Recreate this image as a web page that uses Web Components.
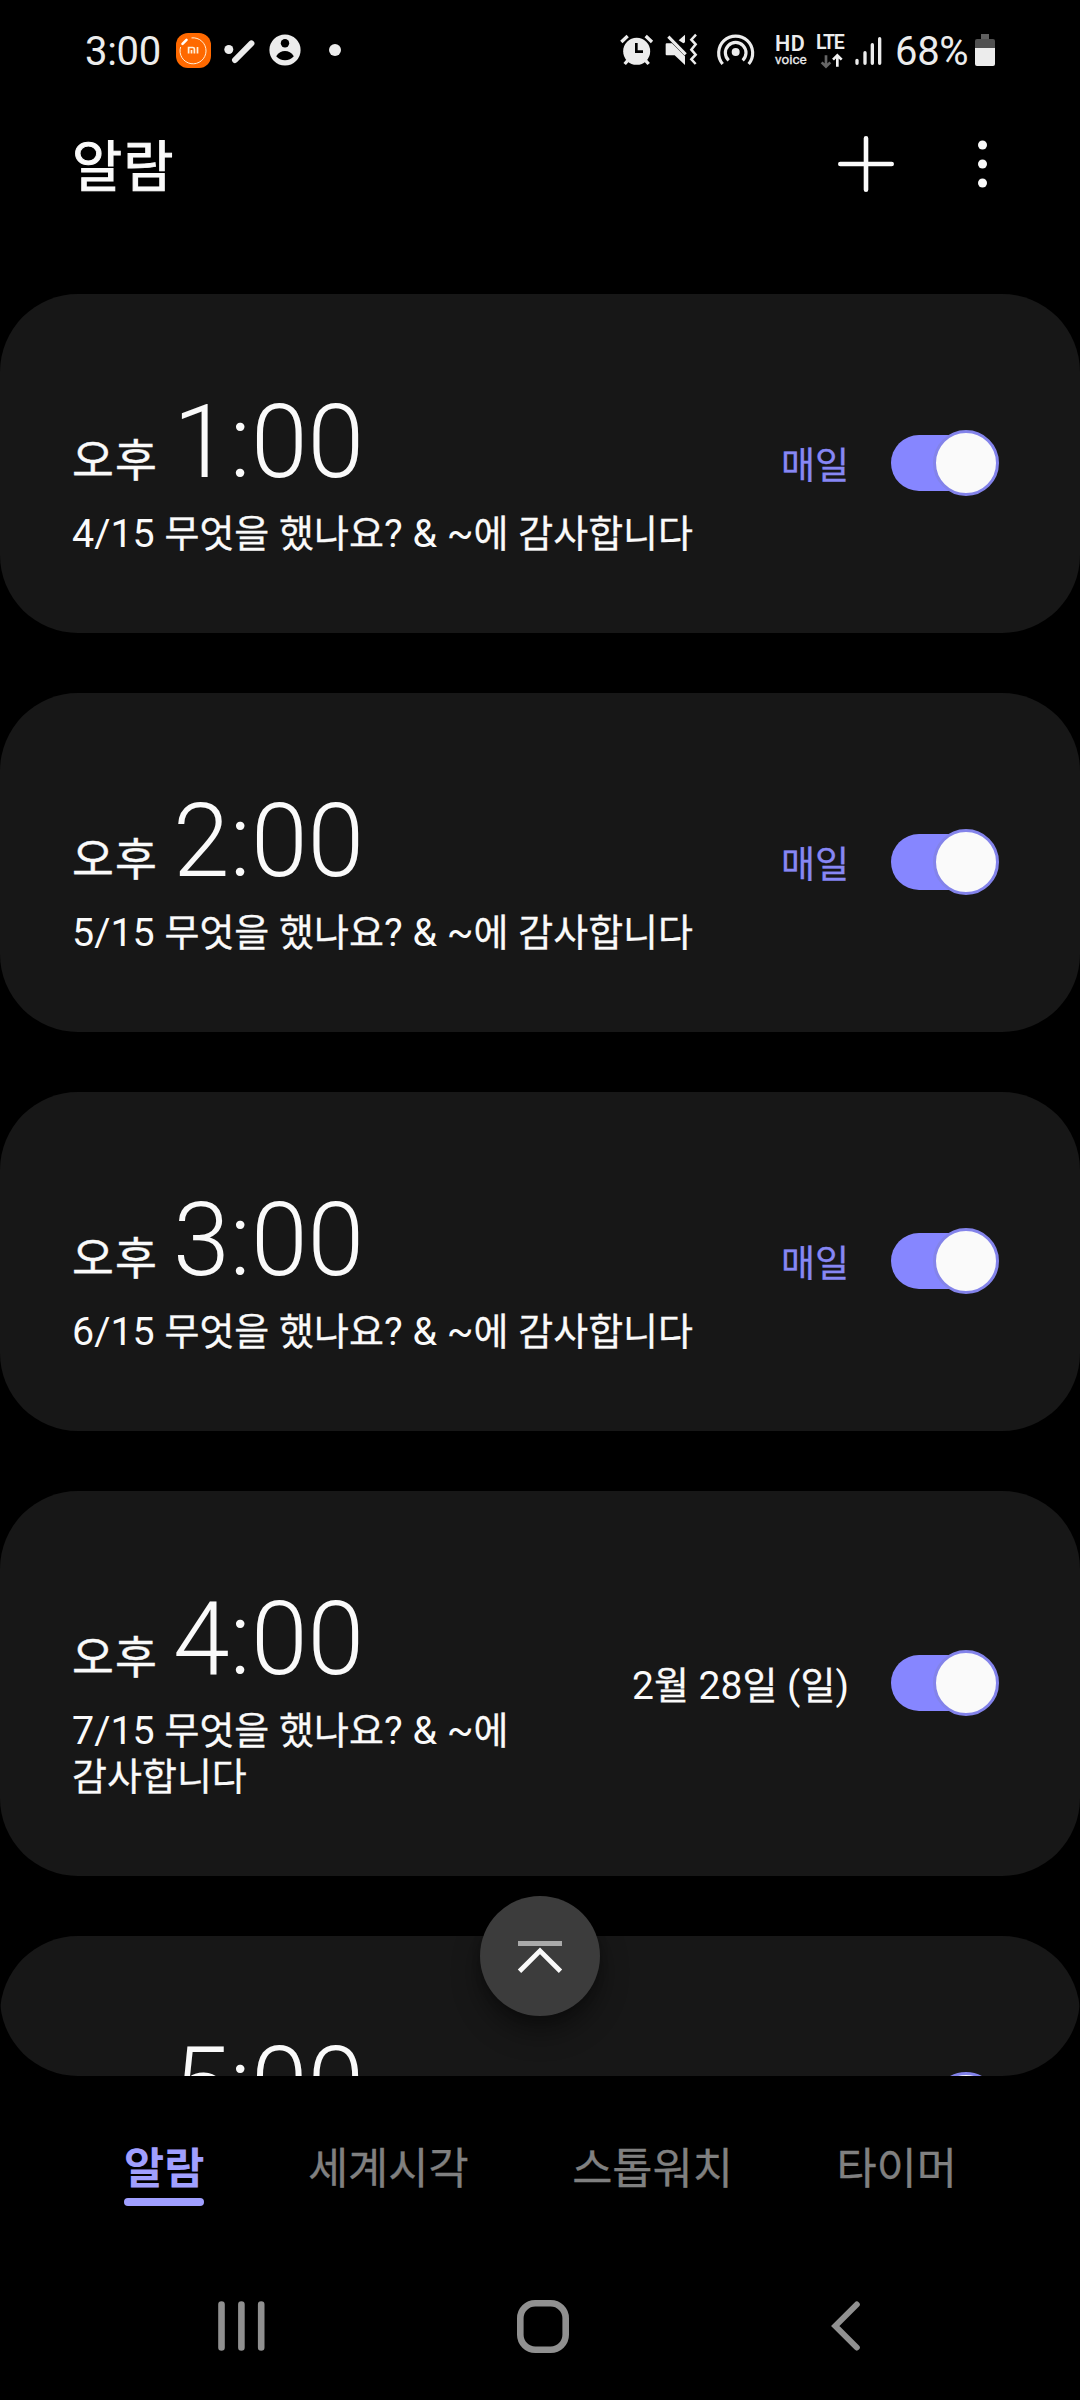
<!DOCTYPE html>
<html lang="ko">
<head>
<meta charset="utf-8">
<title>알람</title>
<style>
html,body{margin:0;background:#000}
body{width:1080px;height:2400px;overflow:hidden;color:#fafafa;font-family:Roboto,"Noto Sans CJK KR",sans-serif}
</style>
</head>
<body>
<clock-app></clock-app>
<script>
const define=(name,html,setup)=>customElements.define(name,class extends HTMLElement{
  connectedCallback(){
    if(this.shadowRoot)return;
    const t=document.createElement('template');
    t.innerHTML=html;
    this.attachShadow({mode:'open'}).append(t.content.cloneNode(true));
    if(setup)setup(this,this.shadowRoot);
  }
});

// Hangul runs are set slightly smaller than the Latin text beside them
const mixed=(el,text)=>{
  for(const run of (text||'').split(/([\uac00-\ud7a3]+)/)){
    if(!run)continue;
    if(/[\uac00-\ud7a3]/.test(run)){
      const s=document.createElement('span');
      s.className='ko';
      s.textContent=run;
      el.append(s);
    }else el.append(run);
  }
};

define('status-bar',`
<style>
:host{display:flex;align-items:flex-start;height:100px;box-sizing:border-box;padding:0 85px;color:#ececec}
svg{display:block;flex:none}
.t{font-size:40px;line-height:48px;margin-top:28px;letter-spacing:-.3px}
.net{display:flex;flex-direction:column;flex:none}
.hd{margin:35px 0 0 19px;width:34px}
.hd b{font-size:21.500px;line-height:18px;font-weight:600;letter-spacing:.5px}
.hd span{font-size:13.500px;line-height:13px;font-weight:400;letter-spacing:0;-webkit-text-stroke:.3px #ececec}
.lte{margin:33px 0 0 7px;width:32px;font-size:19.500px;line-height:20px;font-weight:600;letter-spacing:-1.300px}
.lte svg{margin:0 0 0 4px}
.gap{flex:1}
</style>
<span class="t" style="width:91px">3:00</span>
<svg width="35" height="35" viewBox="0 0 35 35" style="margin-top:33px"><rect width="35" height="35" rx="12" fill="#ff6900"/><path d="M15.5 4.9A13 13 0 1 1 4.6 14" fill="none" stroke="#fff0d8" stroke-width="1"/><path d="M6.5 10.8l4-4" stroke="#fff" stroke-width="2.6" stroke-linecap="round"/><path d="M12.6 20.5v-6h4.200q1.600 0 1.600 1.600v4.400M15.500 17v3.500M21.500 14v6.500" fill="none" stroke="#fff0d8" stroke-width="1.700"/></svg>
<svg width="32" height="26" viewBox="0 0 32 26" style="margin:38px 0 0 13px" fill="#ececec"><circle cx="4.8" cy="11.5" r="4.5"/><path d="M11 22L27.4 5.4" stroke="#ececec" stroke-width="6" stroke-linecap="round"/></svg>
<svg width="32" height="32" viewBox="0 0 32 32" style="margin:34px 0 0 13px"><circle cx="16" cy="16" r="15.6" fill="#ececec"/><circle cx="16" cy="9.2" r="4.2" fill="#000"/><path d="M7.2 22.2C9.5 18.5 12.5 17 16 17s6.500 1.500 8.800 5.200C22.500 25 19.500 26.300 16 26.300S9.500 25 7.200 22.200z" fill="#000"/></svg>
<svg width="12" height="12" viewBox="0 0 12 12" style="margin:44px 0 0 28px"><circle cx="6" cy="6" r="6" fill="#ececec"/></svg>
<span class="gap"></span>
<svg width="34" height="32" viewBox="61 72 102 96" style="margin-top:34px"><circle cx="111" cy="124" r="40.500" fill="#ececec"/><path d="M65 96L84 78M157 96L138 78M84 152L75 162M138 152L147 162" stroke="#ececec" stroke-width="10"/><path d="M110 99v26h20" fill="none" stroke="#000" stroke-width="8"/></svg>
<svg width="34" height="34" viewBox="197 70 102 102" style="margin:33px 0 0 11px"><path d="M199 104q0-3 3-3h16l39 39v26L226 137h-24q-3 0-3-3zM238 92l19-17v23l-5 3z" fill="#ececec"/><path d="M207 81L259 134" stroke="#ececec" stroke-width="9"/><path d="M290 75L276 90L289 104L276 120L289 135L276 149L289 163" fill="none" stroke="#ececec" stroke-width="7.500"/></svg>
<svg width="40" height="34" viewBox="350 66 120 102" style="margin:32px 0 0 17px"><g fill="none" stroke="#ececec" stroke-width="9.500"><path d="M370 162A51 51 0 1 1 448 162"/><path d="M388 151A31 31 0 1 1 430 151"/></g><circle cx="409" cy="126" r="12" fill="#ececec"/></svg>
<div class="net hd"><b>HD</b><span>voice</span></div>
<div class="net lte"><span>LTE</span><svg width="24" height="16" viewBox="655 127 72 48" fill="none" stroke-width="8"><path d="M673 134v34M660 155l13 13 13-13" stroke="#666"/><path d="M707 168v-34M694 147l13-13 13 13" stroke="#f4f4f4"/></svg></div>
<svg width="28" height="30" viewBox="765 78 84 90" style="margin:36px 0 0 7px" stroke="#ececec" stroke-width="10" stroke-linecap="round"><path d="M771 151v9M795 128v32M817 104v56M839 86v74"/></svg>
<span class="t" style="margin-left:12px;width:80px">68%</span>
<svg width="20" height="32" viewBox="0 0 20 32" style="margin:34px 0 0 0"><path d="M6 0h8v5H6z" fill="#606060"/><path d="M0 14V7q0-2 2-2h16q2 0 2 2v7z" fill="#505050"/><path d="M0 14h20v16q0 2-2 2H2q-2 0-2-2z" fill="#ececec"/></svg>
`);

define('app-header',`
<style>
:host{display:flex;align-items:center;height:128px;padding:0 72px}
h1{margin:6px 0 0;flex:1;font-size:54.500px;line-height:66px;font-weight:400;letter-spacing:1px;-webkit-text-stroke:1px #fafafa}
svg{display:block}
</style>
<h1><slot></slot></h1>
<svg width="56" height="56" viewBox="0 0 56 56" style="margin-right:84px" stroke="#fafafa" stroke-width="4.600" stroke-linecap="round"><path d="M28 2.300v51.400M2.300 28h51.400"/></svg>
<svg width="9" height="48" viewBox="0 0 9 48" style="margin-right:21px" fill="#fafafa"><circle cx="4.500" cy="5" r="4.500"/><circle cx="4.500" cy="24" r="4.500"/><circle cx="4.500" cy="43" r="4.500"/></svg>
`);

define('toggle-switch',`
<style>
:host{display:flex;flex:none;align-items:center;width:108px;height:66px;margin-bottom:1px}
.track{flex:1;height:56px;border-radius:28px 0 0 28px;background:#8686ff;margin-right:-33px}
.thumb{flex:none;width:60px;height:60px;border:3px solid #8383ea;border-radius:50%;background:#fafafa}
</style><div class="track"></div><div class="thumb"></div>
`);

define('alarm-card',`
<style>
:host{display:flex;align-items:center;flex:none;box-sizing:border-box;background:#171717;border-radius:78px;padding:0 81px 0 72px}
.main{flex:1;min-width:0;padding:88px 0 76px}
.time{display:flex;align-items:baseline;height:120px;line-height:120px}
.ap{font-size:45.500px;letter-spacing:1.200px;width:101px;flex:none;white-space:nowrap;-webkit-text-stroke:.4px #fafafa}
.num{font-size:102px;font-weight:300}
.label{margin-top:9px;min-height:46px;font-size:39.400px;line-height:46px;word-break:keep-all}
.rep{font-size:39px;line-height:46px;padding-top:5px;margin:0 42px 0 40px;white-space:nowrap}
.ko{font-size:38px;-webkit-text-stroke:.3px currentColor}
:host([daily]) .rep{color:#8787f4}
:host([daily]) .ko{font-size:37px}
:host([daily]) .label .ko{font-size:38px}
</style>
<div class="main"><div class="time"><span class="ap">오후</span><span class="num"></span></div><div class="label"></div></div>
<div class="rep"></div><toggle-switch></toggle-switch>
`,(h,r)=>{
  r.querySelector('.num').textContent=h.getAttribute('time');
  mixed(r.querySelector('.label'),h.getAttribute('label'));
  mixed(r.querySelector('.rep'),h.getAttribute('repeat'));
});

define('alarm-list',`
<style>
:host{display:flex;flex-direction:column;gap:60px;height:1782px;margin-top:66px;overflow:hidden;border-radius:0 0 78px 78px}
</style><slot></slot>
`);

define('go-top',`
<style>
:host{position:absolute;left:480px;top:1896px;width:120px;height:120px;border-radius:50%;background:#3c3c3c;box-shadow:0 16px 28px rgba(0,0,0,.4),0 2px 8px rgba(0,0,0,.2)}
svg{display:block}
</style>
<svg width="120" height="120" viewBox="0 0 120 120" fill="none"><path d="M38 47.500h44" stroke="#aaa" stroke-width="5"/><path d="M39.500 75.300L60 54.800 80.500 75.300" stroke="#fafafa" stroke-width="4.800"/></svg>
`);

define('tab-item',`
<style>
:host{display:block;font-size:43.700px;line-height:52px;color:#808080;height:62px;white-space:nowrap;-webkit-text-stroke:.3px currentColor}
:host([active]){color:#a09fff;font-weight:700;-webkit-text-stroke:0}
.bar{display:none;height:8px;border-radius:4px;margin-top:3px;background:#a09fff}
:host([active]) .bar{display:block}
</style><slot></slot><div class="bar"></div>
`);

define('tab-bar',`
<style>:host{display:flex;justify-content:space-between;padding:67px 123px 0 124px;height:117px}</style><slot></slot>
`);

define('system-nav',`
<style>
:host{display:flex;align-items:center;padding:33px 220px 0 218px;height:66px}
svg{display:block}
.home{margin-left:252px}
.back{margin-left:auto}
</style>
<svg width="47" height="50" viewBox="0 0 47 50" stroke="#909090" stroke-width="6.600" stroke-linecap="round"><path d="M3.500 3.500v43M23.400 3.500v43M43.200 3.500v43"/></svg>
<svg class="home" width="52" height="53" viewBox="0 0 52 53"><rect x="3.300" y="3.300" width="45.400" height="46.400" rx="15" fill="none" stroke="#909090" stroke-width="6.600"/></svg>
<svg class="back" width="29" height="50" viewBox="0 0 29 50" fill="none" stroke="#909090" stroke-width="6" stroke-linecap="round"><path d="M25.800 3.500L4.300 25 25.800 46.500" stroke-linejoin="miter"/></svg>
`);

define('clock-app',`
<style>:host{display:flex;flex-direction:column;width:1080px;height:2400px;position:relative;background:#000;overflow:hidden}</style>
<status-bar></status-bar>
<app-header>알람</app-header>
<alarm-list>
<alarm-card time="1:00" repeat="매일" daily label="4/15 무엇을 했나요? &amp; ~에 감사합니다"></alarm-card>
<alarm-card time="2:00" repeat="매일" daily label="5/15 무엇을 했나요? &amp; ~에 감사합니다"></alarm-card>
<alarm-card time="3:00" repeat="매일" daily label="6/15 무엇을 했나요? &amp; ~에 감사합니다"></alarm-card>
<alarm-card time="4:00" repeat="2월 28일 (일)" label="7/15 무엇을 했나요? &amp; ~에 감사합니다"></alarm-card>
<alarm-card time="5:00"></alarm-card>
</alarm-list>
<tab-bar><tab-item active>알람</tab-item><tab-item>세계시각</tab-item><tab-item>스톱워치</tab-item><tab-item>타이머</tab-item></tab-bar>
<system-nav></system-nav>
<go-top></go-top>
`);
</script>
</body>
</html>
